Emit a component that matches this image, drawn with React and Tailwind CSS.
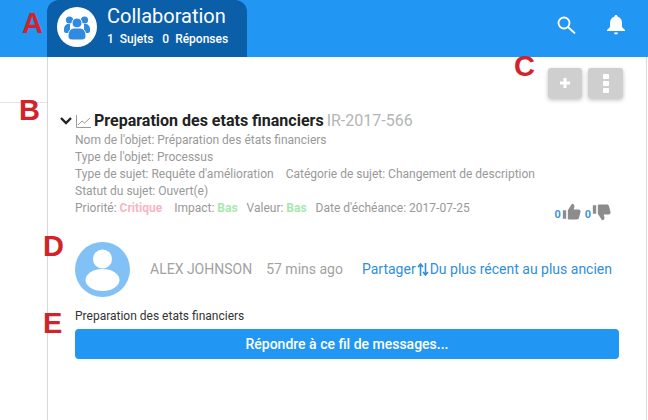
import React from "react";

const Label = ({ children, className }) => (
  <span className={"absolute font-['Liberation_Sans',sans-serif] font-bold text-[#d2232a] text-[29px] leading-none " + className}>{children}</span>
);

const Thumb = ({ down }) => (
  <svg width="20" height="20" viewBox="0 0 24 24" className={down ? "rotate-180 -scale-x-100" : ""} fill="#8c8c8c">
    <path d="M1 10h4v10H1zM7 20V10l5-8c1.500 0 3 1 3 3l-1 4h6c1.500 0 2.600 1.400 2.200 3l-1.800 7c-.3 1.200-1.400 2-2.600 2H9c-1.200 0-2-.8-2-1z" />
  </svg>
);

export default function App() {
  return (
    <div className="relative w-[648px] h-[420px] overflow-hidden bg-white font-['Roboto',sans-serif]">
      <header className="h-[57px] bg-[#2196f3] flex items-start pl-[47px] pr-[23px] justify-between">
        <div className="w-[200px] h-[57px] bg-[#0b5ea8] rounded-t-[12px] flex items-center pl-[10px] pb-[3px] gap-[10px]">
          <div className="w-10 h-10 rounded-full bg-white flex items-center justify-center">
            <svg width="30" height="30" viewBox="0 0 30 30" fill="#2f8ae0">
              <circle cx="7.500" cy="8" r="3.600" />
              <circle cx="22.500" cy="8" r="3.600" />
              <path d="M2 17c0-3 2-5 4-5h2v9H4c-1 0-2-1-2-2zM28 17c0-3-2-5-4-5h-2v9h4c1 0 2-1 2-2z" />
              <circle cx="15" cy="11" r="5" stroke="#fff" strokeWidth="1" />
              <path d="M6 24c0-5 3-8 6-8h6c3 0 6 3 6 8 0 2-1 4-4 4H10c-3 0-4-2-4-4z" stroke="#fff" strokeWidth="1" />
            </svg>
          </div>
          <div className="text-white -mt-[3px]">
            <div className="text-[20px] leading-[24px]">Collaboration</div>
            <div className="text-[12px] font-medium leading-[16px] mt-[3px] flex gap-[9px] whitespace-pre">
              <span>1  Sujets</span><span>0  Réponses</span>
            </div>
          </div>
        </div>
        <div className="flex items-center gap-[31px] h-[49px]">
          <svg width="19" height="18" viewBox="0 0 19 18" fill="none" stroke="#fff" strokeWidth="1.800"><circle cx="7" cy="7" r="5.500" /><path d="M11 11L18 17.500" /></svg>
          <svg width="18" height="21" viewBox="0 0 18 21" fill="#fff"><path d="M9 1c1 0 1.500.7 1.500 1.500C13.500 3.300 15 6 15 9v4l3 3v1H0v-1l3-3V9c0-3 1.500-5.700 4.500-6.500C7.500 1.700 8 1 9 1z" /><path d="M7 18.500h4c0 1-1 2-2 2s-2-1-2-2z" /></svg>
        </div>
      </header>

      <div className="flex h-[363px]">
        <aside className="w-[48px] shrink-0 border-r border-[#d8d8d8] pt-[45px]">
          <div className="border-t border-[#e4e4e4]" />
        </aside>
        <main className="flex-1 min-w-0 mr-[1px] border-r border-[#d8d8d8] pl-[12px] pr-[23px] pt-[11px]">
          <div className="flex justify-end gap-[6px]">
            <button className="w-[34px] h-[30px] bg-[#cfcfcf] rounded-[3px] shadow-[0_2px_4px_rgba(0,0,0,0.25)] flex items-center justify-center">
              <svg width="12" height="12" viewBox="0 0 12 12" fill="#fff"><path d="M4.500 1h3v3.500H11v3H7.500V11h-3V7.500H1v-3h3.500z" /></svg>
            </button>
            <button className="w-[35px] h-[30px] bg-[#cfcfcf] rounded-[3px] shadow-[0_2px_4px_rgba(0,0,0,0.25)] flex flex-col items-center justify-center gap-[2px]">
              <span className="w-[6px] h-[5px] bg-white rounded-[1px]" />
              <span className="w-[6px] h-[5px] bg-white rounded-[1px]" />
              <span className="w-[6px] h-[5px] bg-white rounded-[1px]" />
            </button>
          </div>

          <div className="mt-[12px] flex items-center h-[22px] whitespace-nowrap">
            <svg width="12" height="10" viewBox="0 0 12 10" fill="none" stroke="#222" strokeWidth="2.400" className="mr-[4px]"><path d="M1 2l5 5 5-5" /></svg>
            <svg width="15" height="13" viewBox="0 0 15 13" fill="none" stroke="#9a9a9a" strokeWidth="1" className="mr-[3px]"><path d="M.5 0v12.500H15M2 10l4-4 2.500 2L14 3" /></svg>
            <span className="text-[16px] font-bold text-[#222] leading-[22px]">Preparation des etats financiers</span>
            <span className="text-[16px] text-[#b5b5b5] ml-[3px] leading-[22px]">IR-2017-566</span>
          </div>

          <div className="pl-[15px] pr-[11px] text-[12px] leading-[17px] text-[#999] whitespace-nowrap">
            <div>Nom de l'objet: Préparation des états financiers</div>
            <div>Type de l'objet: Processus</div>
            <div>Type de sujet: Requête d'amélioration<span className="ml-[12px]">Catégorie de sujet: Changement de description</span></div>
            <div>Statut du sujet: Ouvert(e)</div>
            <div className="flex items-start">
              <span>Priorité: <b className="text-[#f7b6c6] font-bold">Critique</b></span>
              <span className="ml-[12px]">Impact: <b className="text-[#a5e8ae] font-bold">Bas</b></span>
              <span className="ml-[9px]">Valeur: <b className="text-[#a5e8ae] font-bold">Bas</b></span>
              <span className="ml-[9px]">Date d'échéance: 2017-07-25</span>
              <span className="ml-auto flex items-center gap-[1px] h-[22px] mt-[1px] text-[#3d94d8] font-bold text-[11px]">
                <span className="mt-[5px]">0</span><Thumb /><span className="mt-[5px] ml-[2px]">0</span><Thumb down />
              </span>
            </div>
          </div>

          <div className="mt-[19px] pl-[15px] pr-[11px] flex items-center whitespace-nowrap">
            <div className="w-[55px] h-[55px] rounded-full bg-[#82c1f6] overflow-hidden">
              <svg width="55" height="55" viewBox="0 0 55 55" fill="#fff"><circle cx="27.500" cy="17" r="9.500" /><ellipse cx="27.500" cy="38" rx="17" ry="11" /></svg>
            </div>
            <span className="ml-[20px] text-[14px] text-[#a2a2a2]">ALEX JOHNSON</span>
            <span className="ml-[14px] text-[14px] text-[#a2a2a2]">57 mins ago</span>
            <span className="ml-auto text-[14px] text-[#2f8fdc] flex items-center">
              Partager
              <svg width="12" height="13" viewBox="0 0 12 13" fill="none" stroke="#2f8fdc" strokeWidth="1.600" className="mx-[1px]"><path d="M3.500 13V1.500M1 4l2.500-3L6 4M8.500 0v11.500M6 9l2.500 3L11 9" /></svg>
              Du plus récent au plus ancien
            </span>
          </div>

          <div className="pl-[15px] mt-[11px] text-[12px] leading-[16px] text-[#333]">Preparation des etats financiers</div>
          <div className="pl-[15px] pr-[4px] mt-[5px]">
            <button className="w-full h-[30px] rounded-[4px] bg-[#2196f3] text-white text-[14px] font-medium text-center">Répondre à ce fil de messages...</button>
          </div>
        </main>
      </div>

      <Label className="left-[22px] top-[9px]">A</Label>
      <Label className="left-[19px] top-[96px]">B</Label>
      <Label className="left-[514px] top-[52px]">C</Label>
      <Label className="left-[43px] top-[232px]">D</Label>
      <Label className="left-[43px] top-[309px]">E</Label>
    </div>
  );
}
